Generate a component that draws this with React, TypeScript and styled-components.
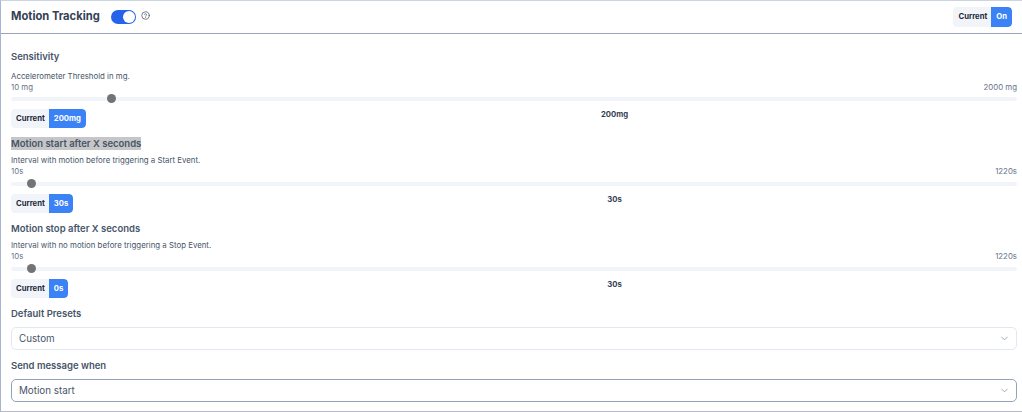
import styled, {createGlobalStyle} from "styled-components";
import {ChevronDown} from "lucide-react";

const GlobalStyle = createGlobalStyle`
  html, body {
    margin: 0;
    padding: 0;
    background: #fff;
  }

  body {
    font-family: "Inter", "Noto Sans", sans-serif;
    color: #334155;
  }
`;

const Panel = styled.div`
  box-sizing: border-box;
  width: 1022px;
  height: 412px;
  border-top: 1px solid #cbd5e1;
  border-left: 1px solid #aab4d0;
  border-bottom: 1px solid #b4bccb;
`;

const Header = styled.div`
  box-sizing: border-box;
  height: 33px;
  display: flex;
  align-items: center;
  padding: 0 10px 0 10px;
  border-bottom: 1px solid #9ca3bb;
`;

const Title = styled.h2`
  margin: 0 11px 2px 0;
  font-size: 11.2px;
  font-weight: 700;
  color: #334155;
`;

const Toggle = styled.div`
  box-sizing: border-box;
  width: 25px;
  height: 14px;
  border-radius: 7px;
  background: #2563eb;
  display: flex;
  justify-content: flex-end;
  align-items: center;
  padding: 1px;
`;

const ToggleKnob = styled.div`
  width: 12px;
  height: 12px;
  border-radius: 50%;
  background: #fff;
`;

const Help = styled.svg`
  width: 9px;
  height: 9px;
  margin: 0 0 3px 5px;
  color: #475569;
`;

const Badge = styled.div<{$h?: number}>`
  display: inline-flex;
  justify-self: start;
  height: ${p => p.$h || 19}px;
  border-radius: 4px;
  overflow: hidden;
  background: #f1f5f9;
  font-size: 7.7px;
  font-weight: 700;
  line-height: 1;
`;

const BadgeLabel = styled.span`
  display: flex;
  align-items: center;
  padding: 0 4px 0 5px;
  color: #1e293b;
`;

const BadgeValue = styled.span`
  display: flex;
  align-items: center;
  padding: 0 5px;
  background: #3b82f6;
  color: #fff;
  border-radius: 0 4px 4px 0;
`;

const Spacer = styled.div`
  flex: 1;
`;

const Body = styled.div`
  padding: 16px 5px 0 10px;
`;

const Section = styled.section`
  margin-bottom: 9px;
`;

const Heading = styled.h3<{$selected?: boolean}>`
  display: table;
  margin: 0;
  height: 13px;
  line-height: 13px;
  font-size: 9.5px;
  font-weight: 600;
  color: #475569;
  background: ${p => p.$selected ? "#c6c6c6" : "transparent"};
`;

const Description = styled.div<{$mt: number}>`
  margin-top: ${p => p.$mt}px;
  font-size: 7.85px;
  line-height: 11px;
  color: #475569;
`;

const Limits = styled.div`
  display: flex;
  justify-content: space-between;
  font-size: 7.85px;
  line-height: 11px;
  color: #64748b;
`;

const Track = styled.div<{$mt: number}>`
  position: relative;
  margin-top: ${p => p.$mt}px;
  height: 4px;
  border-radius: 2px;
  background: #f1f5f9;
`;

const Thumb = styled.div`
  position: absolute;
  top: -3px;
  width: 9px;
  height: 9px;
  border-radius: 50%;
  background: #737373;
`;

const ValueRow = styled.div`
  display: grid;
  grid-template-columns: 20% 80%;
  margin-top: 8px;
`;

const ValueText = styled.div`
  text-align: center;
  font-size: 7.7px;
  font-weight: 700;
  line-height: 11px;
  color: #334155;
`;

const FieldLabel = styled.div<{$mt?: number}>`
  margin-top: ${p => p.$mt ?? 0}px;
  height: 13px;
  line-height: 13px;
  font-size: 9.5px;
  font-weight: 600;
  color: #475569;
`;

const Select = styled.div<{$focused?: boolean}>`
  box-sizing: border-box;
  height: 23px;
  margin-top: 7px;
  display: flex;
  align-items: center;
  justify-content: space-between;
  padding: 0 6px 0 7px;
  border-radius: 5px;
  border: 1px solid ${p => p.$focused ? "#94a3b8" : "#e2e8f0"};
  font-size: 9.8px;
  color: #475569;

  svg {
    color: #94a3b8;
  }
`;

const sliders = [
    {
        title: "Sensitivity", desc: "Accelerometer Threshold in mg.", min: "10 mg", max: "2000 mg",
        thumb: 95.5, current: "200mg", value: "200mg", selected: false,
    },
    {
        title: "Motion start after X seconds", desc: "Interval with motion before triggering a Start Event.", min: "10s", max: "1220s",
        thumb: 16, current: "30s", value: "30s", selected: true,
    },
    {
        title: "Motion stop after X seconds", desc: "Interval with no motion before triggering a Stop Event.", min: "10s", max: "1220s",
        thumb: 16, current: "0s", value: "30s", selected: false,
    },
];

const App = () => {
    return (
        <Panel>
            <GlobalStyle/>
            <Header>
                <Title>Motion Tracking</Title>
                <Toggle><ToggleKnob/></Toggle>
                <Help viewBox="0 0 24 24" fill="none" stroke="currentColor" strokeWidth="2" strokeLinecap="round">
                    <circle cx="12" cy="12" r="10"/>
                    <path d="M9 9a3 3 0 0 1 5.8 1c0 2-2.8 2.6-2.8 4"/>
                    <path d="M12 17.5h.01"/>
                </Help>
                <Spacer/>
                <Badge $h={20}>
                    <BadgeLabel>Current</BadgeLabel>
                    <BadgeValue>On</BadgeValue>
                </Badge>
            </Header>
            <Body>
                {sliders.map((s, i) => (
                    <Section key={s.title}>
                        <Heading $selected={s.selected}>{s.title}</Heading>
                        <Description $mt={i === 0 ? 8 : 5}>{s.desc}</Description>
                        <Limits>
                            <span>{s.min}</span>
                            <span>{s.max}</span>
                        </Limits>
                        <Track $mt={i === 0 ? 4 : 5}>
                            <Thumb style={{left: s.thumb}}/>
                        </Track>
                        <ValueRow>
                            <Badge>
                                <BadgeLabel>Current</BadgeLabel>
                                <BadgeValue>{s.current}</BadgeValue>
                            </Badge>
                            <ValueText>{s.value}</ValueText>
                        </ValueRow>
                    </Section>
                ))}
                <FieldLabel>Default Presets</FieldLabel>
                <Select>
                    Custom
                    <ChevronDown size={11}/>
                </Select>
                <FieldLabel $mt={9}>Send message when</FieldLabel>
                <Select $focused>
                    Motion start
                    <ChevronDown size={11}/>
                </Select>
            </Body>
        </Panel>
    );
};

export default App;
